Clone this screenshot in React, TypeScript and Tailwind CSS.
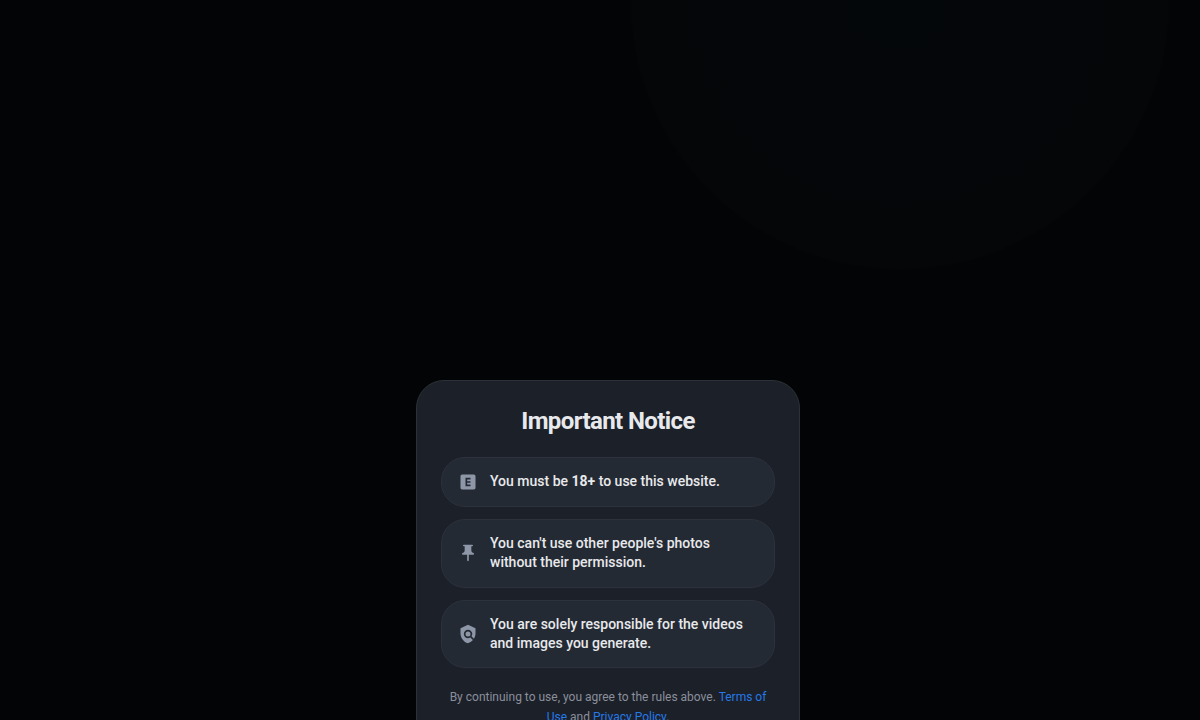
import type { ReactNode } from "react";
import { MdExplicit, MdPolicy, MdPushPin } from "react-icons/md";
import type { IconType } from "react-icons";

interface Rule {
  icon: IconType;
  text: ReactNode;
}

const rules: Rule[] = [
  {
    icon: MdExplicit,
    text: (
      <>
        You must be <strong className="font-bold">18+</strong> to use this
        website.
      </>
    ),
  },
  {
    icon: MdPushPin,
    text: "You can't use other people's photos without their permission.",
  },
  {
    icon: MdPolicy,
    text: "You are solely responsible for the videos and images you generate.",
  },
];

function RuleRow({ icon: Icon, text }: Rule) {
  return (
    <li className="flex items-center gap-3 rounded-3xl border border-[#2c313b] bg-[#242a33] px-4 py-3.5">
      <Icon size={20} className="shrink-0 text-[#8d97a7]" />
      <p className="text-sm leading-snug font-medium text-[#e8e9ec]">{text}</p>
    </li>
  );
}

export default function App() {
  return (
    <div className="h-[720px] overflow-hidden bg-[#030406] bg-[radial-gradient(circle_at_75%_0,#04070a_0,#040609_175px,#040607_268px,#030406_270px)] pt-[380px] pl-4 font-['Roboto',sans-serif]">
      <div className="mx-auto w-96 rounded-[28px] border border-[#2c3139] bg-[#1c2028] p-6">
        <h1 className="mb-5 text-center text-2xl font-bold tracking-tight text-[#e8e9ec]">
          Important Notice
        </h1>

        <ul className="space-y-3">
          {rules.map((rule, idx) => (
            <RuleRow key={idx} {...rule} />
          ))}
        </ul>

        <p className="mt-5 text-center text-xs leading-relaxed text-[#8a8f9c]">
          By continuing to use, you agree to the rules above.{" "}
          <a href="#" className="text-[#2579e8]">
            Terms of Use
          </a>{" "}
          and{" "}
          <a href="#" className="text-[#2579e8]">
            Privacy Policy
          </a>
          .
        </p>
      </div>
    </div>
  );
}
